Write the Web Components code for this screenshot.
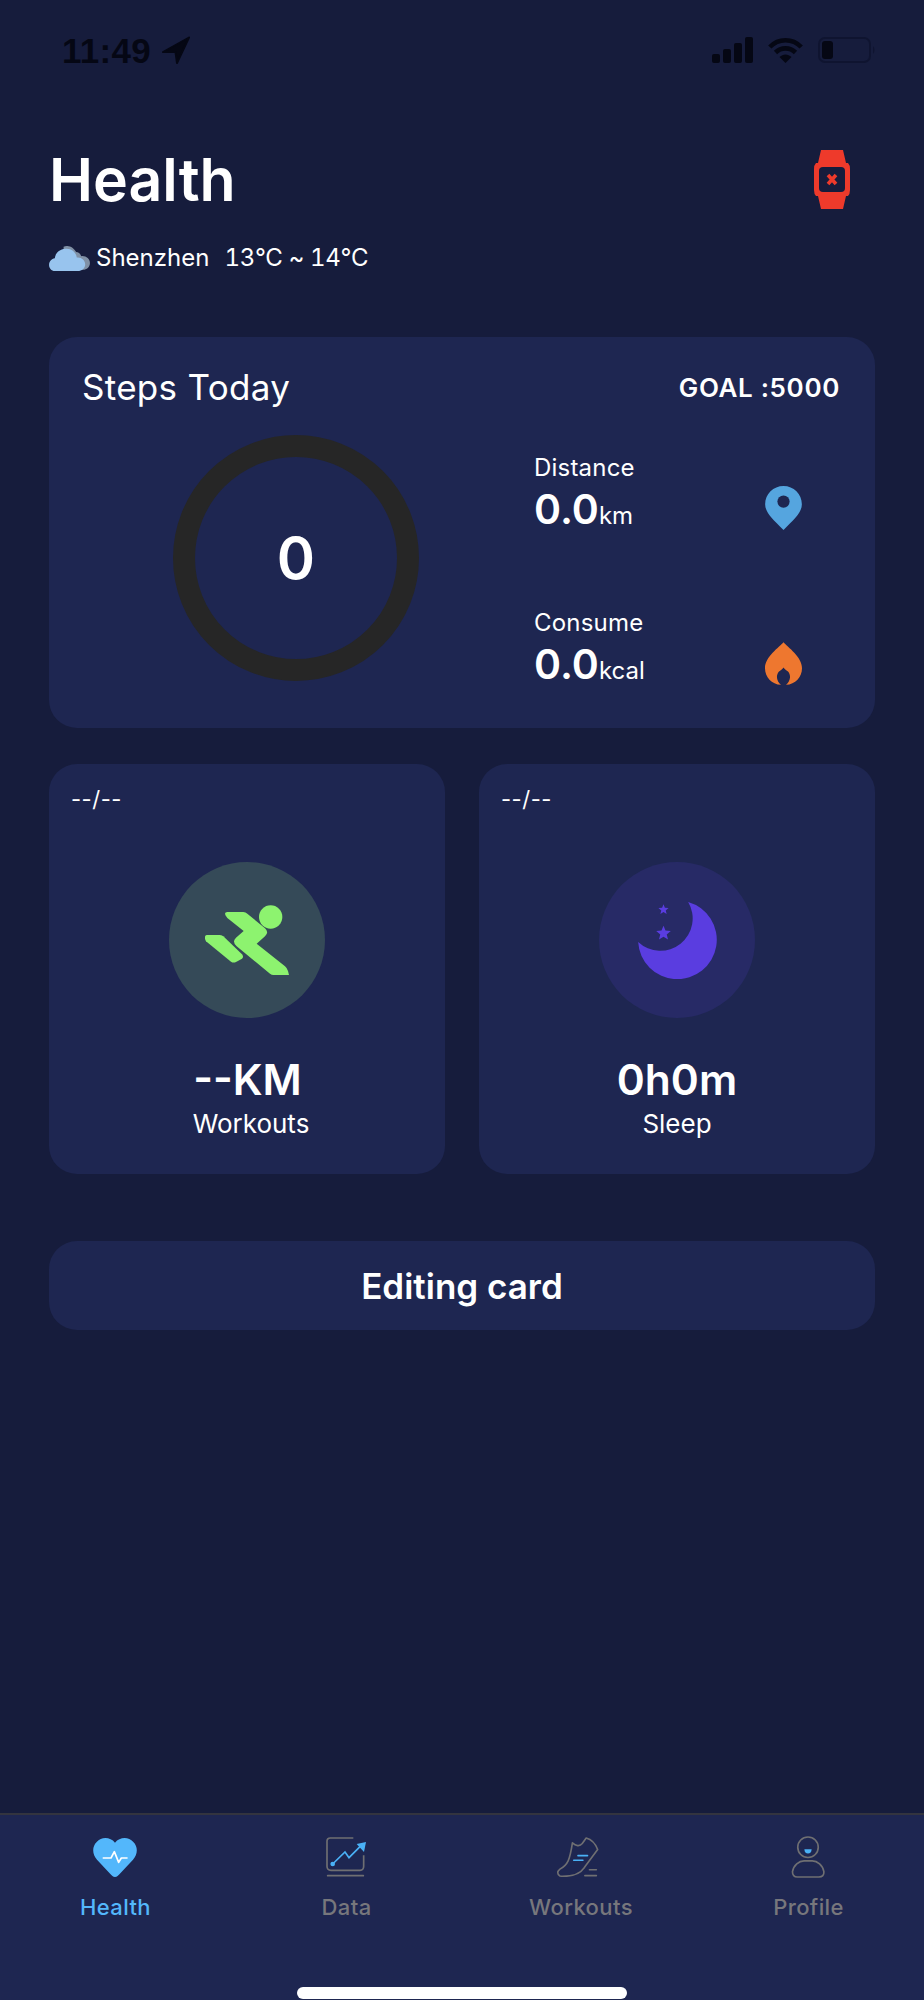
<!DOCTYPE html>
<html lang="en">
<head>
<meta charset="utf-8">
<title>Health</title>
<style>
html,body{margin:0;padding:0;background:#161c3c;}
body{font-family:Inter,"Liberation Sans",sans-serif;color:#fff;}
</style>
</head>
<body>
<health-app>
  <status-bar slot="status"></status-bar>
  <health-header slot="main"></health-header>
  <steps-card slot="main">
    <stat-row label="Distance" value="0.0" unit="km">
      <svg slot="icon" width="37" height="44" viewBox="792 140 111 133"><path fill="#55a5df" d="M847.5 140C817 140 792 164 792 195C792 219 812 238 847.5 273C883 238 903 219 903 195C903 164 878 140 847.5 140Z"/><circle cx="847.5" cy="187" r="18.5" fill="#1e2651"/></svg>
    </stat-row>
    <stat-row label="Consume" value="0.0" unit="kcal">
      <svg slot="icon" width="37" height="43" viewBox="792 607 111 128"><path fill="#ee772f" d="M847.5 607C835 622 792 650 792 685C792 712 812 733 840 735C825 722 825 705 834 695C840 690 845 688 847.5 683C850 688 855 690 861 695C870 705 870 722 855 735C883 733 903 712 903 685C903 650 860 622 847.5 607Z"/></svg>
    </stat-row>
  </steps-card>
  <metric-grid slot="main">
    <metric-card value="--KM" label="Workouts" tone="#354a58" nudge="4">
      <svg slot="icon" width="84" height="71" viewBox="165 194 252 213"><g fill="#8df36f"><circle cx="362" cy="230" r="35"/><path d="M232 215H280Q287 215 292 220L345 264Q358 276 345 288L320 310L405 378Q412 384 414 392L417 404H370Q365 404 360 400L260 318Q245 304 258 292L281 272L232 233Q218 217 232 215Z"/><path d="M170 284H208Q214 284 220 288L276 342Q282 350 276 355L258 365Q250 369 243 364L168 303Q160 286 170 284Z"/></g></svg>
    </metric-card>
    <metric-card value="0h0m" label="Sleep" tone="#272a66">
      <svg slot="icon" width="79" height="77" viewBox="173 185 236 231"><g fill="#5a3de0"><path d="M323 185A118 118 0 1 1 173 305A97 97 0 0 0 323 185Z"/><path transform="translate(249 208) scale(16)" d="M0-1L.26-.36L.95-.31L.42.14L.59.81L0 .44L-.59.81L-.42.14L-.95-.31L-.26-.36Z"/><path transform="translate(249 279) scale(23)" d="M0-1L.26-.36L.95-.31L.42.14L.59.81L0 .44L-.59.81L-.42.14L-.95-.31L-.26-.36Z"/></g></svg>
    </metric-card>
  </metric-grid>
  <edit-card slot="main">Editing card</edit-card>
  <tab-bar slot="tabs">
    <tab-item label="Health" active>
      <svg slot="icon" width="45" height="40" viewBox="280 110 135 120"><path fill="#53b7fb" d="M346 230C340 230 336 225 332 221L292 178C278 162 276 140 291 125C306 108 332 110 346 127C360 110 386 108 401 125C416 140 414 162 400 178L360 221C356 225 352 230 346 230Z"/><path fill="none" stroke="#fff" stroke-width="5" stroke-linecap="round" stroke-linejoin="round" d="M311 173H334L344 154L357 186L365 173H382"/></svg>
    </tab-item>
    <tab-item label="Data">
      <svg slot="icon" width="41" height="40" viewBox="983 110 123 120"><g fill="none" stroke="#6f6f72" stroke-width="5"><path d="M1065 113H996Q986 113 986 123V198Q986 210 998 210H1085Q1096 210 1096 198V165"/><path d="M988 226H1095" stroke-linecap="round"/></g><g fill="#4ab1f6"><circle cx="1003" cy="191" r="7"/><path d="M1003 191L1040 155L1052 172L1088 136" fill="none" stroke="#4ab1f6" stroke-width="5"/><path d="M1103 125L1097 155L1075 131Z"/></g></svg>
    </tab-item>
    <tab-item label="Workouts" nudge="7">
      <svg slot="icon" width="43" height="40" viewBox="281 110 129 122"><g fill="none" stroke-width="5" stroke-linecap="round" stroke-linejoin="round"><path stroke="#6f6f72" d="M292 229C283 224 283 215 292 208C316 195 322 180 330 128C340 137 352 140 360 130L372 113C390 118 402 135 407 148C392 168 376 190 365 205C354 222 335 230 300 230Z"/><path stroke="#6f6f72" d="M368 228H403M382 210H403"/><path stroke="#4ab1f6" d="M347 167H376M334 181H362"/></g></svg>
    </tab-item>
    <tab-item label="Profile">
      <svg slot="icon" width="35" height="42" viewBox="986 107 105 127"><g fill="none" stroke="#6f6f72" stroke-width="5"><circle cx="1037" cy="141" r="31"/><path d="M1005 231H1070Q1086 231 1085 215C1082 195 1065 182 1050 182H1025C1010 182 993 195 990 215Q990 231 1005 231Z"/></g><path fill="#4ab1f6" d="M1026 147H1048Q1047 160 1037 160Q1027 160 1026 147Z"/></svg>
    </tab-item>
  </tab-bar>
</health-app>
<script>
const def = (name, css, html, setup) => {
  customElements.define(name, class extends HTMLElement {
    connectedCallback() {
      if (this.shadowRoot) return;
      const root = this.attachShadow({mode: 'open'});
      const a = n => this.getAttribute(n) ?? '';
      root.innerHTML = `<style>${css}</style>` + (typeof html === 'function' ? html(a) : html);
      if (setup) setup(this, root);
    }
  });
};

def('health-app', `
  :host{display:flex;flex-direction:column;height:2000px;background:#161c3c;overflow:hidden;}
  .main{flex:1;display:flex;flex-direction:column;padding:0 49px 0 49px;}
`, `<slot name="status"></slot><div class="main"><slot name="main"></slot></div><slot name="tabs"></slot>`);

def('status-bar', `
  :host{display:flex;align-items:center;justify-content:space-between;box-sizing:border-box;height:100px;padding:0 48px 0 62px;color:#050714;}
  .l,.r{display:flex;align-items:center;}
  .t{font:700 35px/1 "Liberation Sans",sans-serif;width:88px;letter-spacing:.3px;}
  .l svg{margin-left:12px;}
  .r svg{display:block;}
`, `<div class="l"><span class="t">11:49</span>
  <svg width="28" height="28" viewBox="0 0 28 28"><path fill="#050714" stroke="#050714" stroke-width="2" stroke-linejoin="round" d="M27 1.5L1 16H13.5L15 27Z"/></svg></div>
  <div class="r">
  <svg width="41" height="26" viewBox="0 0 41 26" fill="#050714"><rect x="0" y="17" width="8" height="9" rx="2"/><rect x="11" y="12" width="8" height="14" rx="2"/><rect x="22" y="6" width="8" height="20" rx="2"/><rect x="33" y="0" width="8" height="26" rx="2"/></svg>
  <svg style="margin-left:15px" width="35" height="26" viewBox="0 0 35 26"><g fill="none" stroke="#050714" stroke-width="4.6"><path d="M1.8 10C10.5 1 24.5 1 33.2 10"/><path d="M7.5 15.5C13 10 22 10 27.5 15.5"/></g><path fill="#050714" d="M17.5 26L11.5 20C15 16.5 20 16.5 23.5 20Z"/></svg>
  <svg style="margin-left:15px" width="58" height="26" viewBox="0 0 58 26"><rect x="1" y="1" width="51" height="24" rx="6" fill="none" stroke="#0f1430" stroke-width="2"/><rect x="4" y="4" width="11" height="18" rx="3" fill="#050714"/><path d="M55 9Q58 13 55 17Z" fill="#0f1430"/></svg></div>`);

def('health-header', `
  :host{display:block;height:237px;position:relative;}
  .row{display:flex;justify-content:space-between;align-items:center;height:59px;margin-top:50px;padding-right:25px;}
  h1{margin:0;font:600 59px/59px Inter,sans-serif;color:#fff;}
  .w{display:flex;align-items:center;height:30px;margin-top:34px;font:400 24px/30px Inter,sans-serif;color:#fff;white-space:pre;font-variant-numeric:tabular-nums;}
  .w svg{margin:0 6px 0 0;}
  .tmp{margin-left:15px;letter-spacing:-.3px;}
`, `<div class="row"><h1>Health</h1>
  <svg width="36" height="59" viewBox="813 150 36 59"><path fill="#ee3a2b" d="M820 150H842L845 163H847Q849 165 849 169V190Q849 194 847 196H845L842 209H820L817 196H815Q813 194 813 190V169Q813 165 815 163H817Z"/><rect x="818" y="167" width="26" height="25" rx="4" fill="#161c3c"/><path d="M827 175L835 184M835 175L827 184" stroke="#ee3a2b" stroke-width="3.6"/></svg></div>
  <div class="w"><svg width="41" height="25" viewBox="27 48 121 74"><path fill="#8091a6" d="M70 50C85 44 100 52 107 66C113 66 120 70 122 78C136 76 148 86 148 98C148 110 138 118 128 118H70Z"/><path fill="#98c4ee" d="M75 56C93 54 107 66 109 82C122 80 134 90 134 102C134 114 124 122 112 122H44C34 122 27 113 27 104C27 94 34 86 44 84C46 68 58 58 75 56Z"/></svg><span>Shenzhen</span><span class="tmp">13°C ~ 14°C</span></div>`);

def('steps-card', `
  :host{display:block;box-sizing:border-box;height:391px;background:#1e2651;border-radius:28px;padding:27px 35px 47px 33px;}
  .top{display:flex;justify-content:space-between;align-items:center;height:46px;}
  .title{font:400 35px/46px Inter,sans-serif;letter-spacing:.3px;}
  .goal{font:600 26px/46px Inter,sans-serif;letter-spacing:.65px;padding-top:1px;}
  .body{display:flex;margin-top:25px;}
  .ring{box-sizing:border-box;width:246px;height:246px;border:22px solid #262626;border-radius:50%;margin-left:91px;display:flex;align-items:center;justify-content:center;font:600 58px/1 Inter,sans-serif;}
  .stats{margin-left:115px;flex:1;display:flex;flex-direction:column;gap:55px;margin-top:-4px;}
`, `<div class="top"><span class="title">Steps Today</span><span class="goal">GOAL :5000</span></div>
  <div class="body"><div class="ring">0</div><div class="stats"><slot></slot></div></div>`);

def('stat-row', `
  :host{display:flex;justify-content:space-between;align-items:flex-end;height:100px;padding-right:38px;}
  .b{margin-bottom:-2.5px;}
  .l{font:400 24px/30px Inter,sans-serif;letter-spacing:.2px;}
  .v{font:600 41px/50px Inter,sans-serif;margin-top:.5px;}
  .u{font:400 24px/1 Inter,sans-serif;}
  ::slotted(svg){display:block;margin-bottom:1px;}
`, a => `<div class="b"><div class="l">${a('label')}</div><div class="v">${a('value')}<span class="u">${a('unit')}</span></div></div><slot name="icon"></slot>`);

def('metric-grid', `
  :host{display:grid;grid-template-columns:396px 396px;justify-content:space-between;margin-top:36px;}
`, `<slot></slot>`);

def('metric-card', `
  :host{display:flex;flex-direction:column;align-items:center;height:410px;box-sizing:border-box;background:#1e2651;border-radius:28px;padding-top:20px;}
  .d{align-self:flex-start;margin-left:22px;font:400 22px/30px Inter,sans-serif;letter-spacing:.5px;}
  .c{width:156px;height:156px;border-radius:50%;margin-top:48px;display:flex;align-items:center;justify-content:center;}
  .v{font:600 42.5px/50px Inter,sans-serif;margin-top:37px;}
  .l{font:400 26px/30px Inter,sans-serif;margin-top:4px;}
  ::slotted(svg){display:block;}
`, a => `<div class="d">--/--</div><div class="c" style="background:${a('tone')}"><slot name="icon"></slot></div><div class="v" style="padding-left:${a('nudge') ? 1 : 0}px">${a('value')}</div><div class="l" style="padding-left:${(a('nudge') || 0) * 2}px">${a('label')}</div>`);

def('edit-card', `
  :host{display:flex;align-items:center;justify-content:center;box-sizing:border-box;height:89px;padding-top:1px;margin-top:67px;background:#1e2651;border-radius:28px;font:600 35px/1 Inter,sans-serif;}
`, `<slot></slot>`);

def('tab-bar', `
  :host{display:block;box-sizing:border-box;height:187px;background:#1e2651;border-top:2px solid #33343f;}
  .tabs{display:grid;grid-template-columns:repeat(4,231px);}
  .h{width:330px;height:12px;border-radius:6px;background:#fff;margin:65px 0 0 297px;}
`, `<div class="tabs"><slot></slot></div><div class="h"></div>`);

def('tab-item', `
  :host{display:flex;flex-direction:column;align-items:center;padding-top:21px;font:500 22px/30px Inter,sans-serif;color:#77777c;letter-spacing:.4px;}
  :host([active]){color:#53b7fb;}
  .i{height:42px;display:flex;align-items:center;}
  .t{margin-top:14px;}
  ::slotted(svg){display:block;}
`, a => `<div class="i"><slot name="icon"></slot></div><div class="t" style="padding-left:${a('nudge') || 0}px">${a('label')}</div>`);
</script>
</body>
</html>
